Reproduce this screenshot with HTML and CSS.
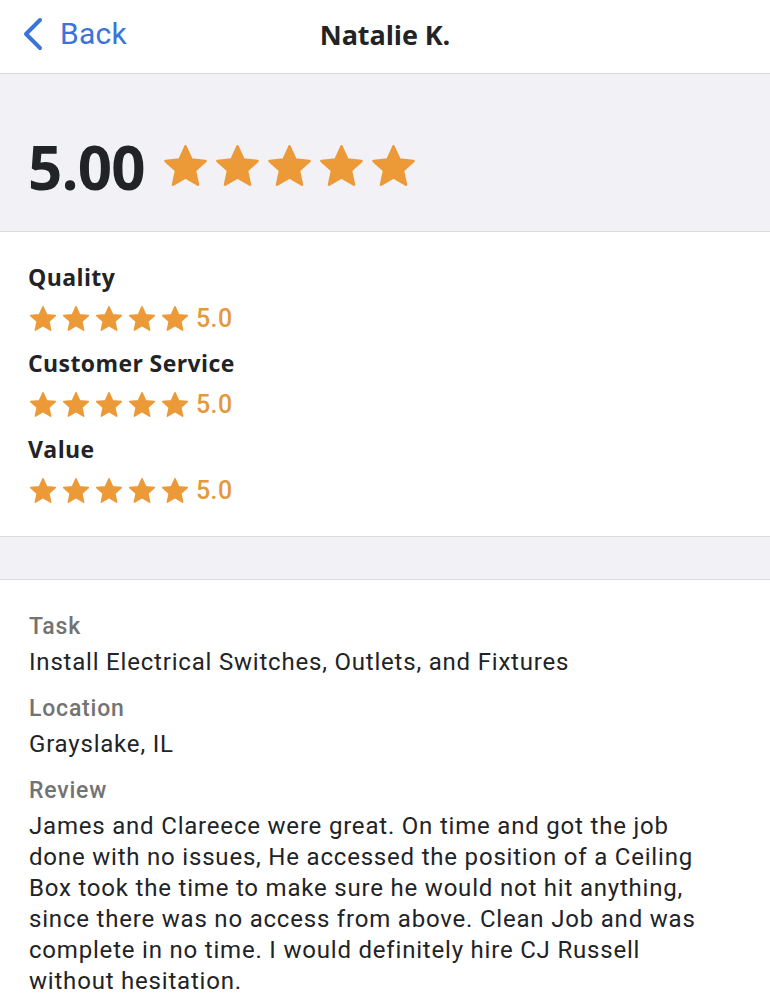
FILE: index.html
```html
<!DOCTYPE html>
<html>
<head>
<meta charset="utf-8">
<link rel="stylesheet" href="styles.css">
</head>
<body>
<svg width="0" height="0" class="defs">
  <defs>
    <path id="star" d="M12 2.2 L14.9 8.6 L21.8 9.3 L16.6 14 L18.1 20.9 L12 17.3 L5.9 20.9 L7.4 14 L2.2 9.3 L9.1 8.6 Z"/>
  </defs>
</svg>
<div class="page">
  <header class="nav">
    <div class="back">
      <svg class="chev" width="24" height="34" viewBox="0 0 24 34"><path d="M19 3 L5 17 L19 31" fill="none" stroke="#3a74d9" stroke-width="4" stroke-linecap="round" stroke-linejoin="round"/></svg>
      <span class="back-text">Back</span>
    </div>
    <div class="title">Natalie K.</div>
  </header>

  <section class="overall">
    <div class="score">5.00</div>
    <div class="stars big">
      <svg viewBox="0 0 24 24"><use href="#star"/></svg>
      <svg viewBox="0 0 24 24"><use href="#star"/></svg>
      <svg viewBox="0 0 24 24"><use href="#star"/></svg>
      <svg viewBox="0 0 24 24"><use href="#star"/></svg>
      <svg viewBox="0 0 24 24"><use href="#star"/></svg>
    </div>
  </section>

  <section class="ratings">
    <div class="group">
      <div class="rlabel">Quality</div>
      <div class="rrow">
        <div class="stars small">
          <svg viewBox="0 0 24 24"><use href="#star"/></svg>
          <svg viewBox="0 0 24 24"><use href="#star"/></svg>
          <svg viewBox="0 0 24 24"><use href="#star"/></svg>
          <svg viewBox="0 0 24 24"><use href="#star"/></svg>
          <svg viewBox="0 0 24 24"><use href="#star"/></svg>
        </div>
        <span class="rval">5.0</span>
      </div>
    </div>
    <div class="group">
      <div class="rlabel">Customer Service</div>
      <div class="rrow">
        <div class="stars small">
          <svg viewBox="0 0 24 24"><use href="#star"/></svg>
          <svg viewBox="0 0 24 24"><use href="#star"/></svg>
          <svg viewBox="0 0 24 24"><use href="#star"/></svg>
          <svg viewBox="0 0 24 24"><use href="#star"/></svg>
          <svg viewBox="0 0 24 24"><use href="#star"/></svg>
        </div>
        <span class="rval">5.0</span>
      </div>
    </div>
    <div class="group">
      <div class="rlabel">Value</div>
      <div class="rrow">
        <div class="stars small">
          <svg viewBox="0 0 24 24"><use href="#star"/></svg>
          <svg viewBox="0 0 24 24"><use href="#star"/></svg>
          <svg viewBox="0 0 24 24"><use href="#star"/></svg>
          <svg viewBox="0 0 24 24"><use href="#star"/></svg>
          <svg viewBox="0 0 24 24"><use href="#star"/></svg>
        </div>
        <span class="rval">5.0</span>
      </div>
    </div>
  </section>

  <div class="spacer"></div>

  <section class="details">
    <div class="dlabel">Task</div>
    <div class="dval">Install Electrical Switches, Outlets, and Fixtures</div>
    <div class="dlabel">Location</div>
    <div class="dval">Grayslake, IL</div>
    <div class="dlabel">Review</div>
    <div class="dval review">James and Clareece were great. On time and got the job done with no issues, He accessed the position of a Ceiling Box took the time to make sure he would not hit anything, since there was no access from above. Clean Job and was complete in no time. I would definitely hire CJ Russell without hesitation.</div>
  </section>
</div>
</body>
</html>
```
FILE: styles.css
```css
html, body {
  margin: 0;
  padding: 0;
  background: #ffffff;
}
body {
  font-family: Roboto, "Liberation Sans", sans-serif;
  color: #222326;
}
.defs {
  position: absolute;
  width: 0;
  height: 0;
}
.page {
  width: 770px;
  overflow: hidden;
}
.nav {
  height: 73px;
  border-bottom: 1px solid #d9d9dd;
  display: flex;
  align-items: center;
  justify-content: center;
  position: relative;
  background: #fff;
}
.back {
  position: absolute;
  left: 21px;
  top: 17px;
  display: flex;
  align-items: center;
  gap: 15px;
}
.chev {
  display: block;
}
.back-text {
  font-size: 30px;
  color: #3a74d9;
  line-height: 34px;
  letter-spacing: 0.3px;
}
.title {
  font-family: "Open Sans", Roboto, sans-serif;
  font-weight: 700;
  font-size: 27px;
  line-height: 34px;
  color: #222326;
  letter-spacing: -0.1px;
  margin-top: -3px;
}
.overall {
  background: #f2f2f6;
  height: 158px;
  border-bottom: 1px solid #dcdce0;
  display: flex;
  align-items: center;
  padding-left: 28px;
  gap: 16px;
  padding-top: 28px;
  box-sizing: border-box;
}
.score {
  font-family: "Open Sans", Roboto, sans-serif;
  font-weight: 700;
  font-size: 60px;
  line-height: 62px;
  letter-spacing: -0.8px;
  color: #222326;
}
.stars {
  display: flex;
  fill: #ec9a38;
  stroke: #ec9a38;
  stroke-linejoin: round;
  stroke-width: 1.3;
}
.stars svg {
  display: block;
  overflow: visible;
}
.stars.big {
  gap: 3px;
}
.stars.big svg {
  width: 49px;
  height: 49px;
}
.stars.small {
  gap: 3px;
}
.stars.small svg {
  width: 30px;
  height: 30px;
}
.ratings {
  padding: 30px 28px 28px 28px;
  border-bottom: 1px solid #dcdce0;
}
.rlabel {
  font-family: "Open Sans", Roboto, sans-serif;
  font-weight: 700;
  font-size: 23px;
  line-height: 30px;
  color: #222326;
  letter-spacing: 0.4px;
}
.rrow {
  margin-top: 10px;
  height: 34px;
  display: flex;
  align-items: center;
  gap: 6px;
}
.group + .group {
  margin-top: 12px;
}
.rval {
  font-size: 25px;
  font-weight: 500;
  color: #e49a3c;
  line-height: 30px;
  letter-spacing: 0.4px;
}
.spacer {
  height: 42px;
  background: #f2f2f6;
  border-bottom: 1px solid #dcdce0;
}
.details {
  padding: 32px 20px 0 29px;
}
.dlabel {
  font-size: 23px;
  font-weight: 500;
  color: #737373;
  line-height: 30px;
  letter-spacing: 0.8px;
}
.dval {
  font-size: 24px;
  line-height: 32px;
  color: #222326;
  margin-top: 4px;
  margin-bottom: 16px;
  letter-spacing: 0.8px;
}
.dval.review {
  line-height: 31px;
  margin-top: 5px;
  width: 692px;
}
```
